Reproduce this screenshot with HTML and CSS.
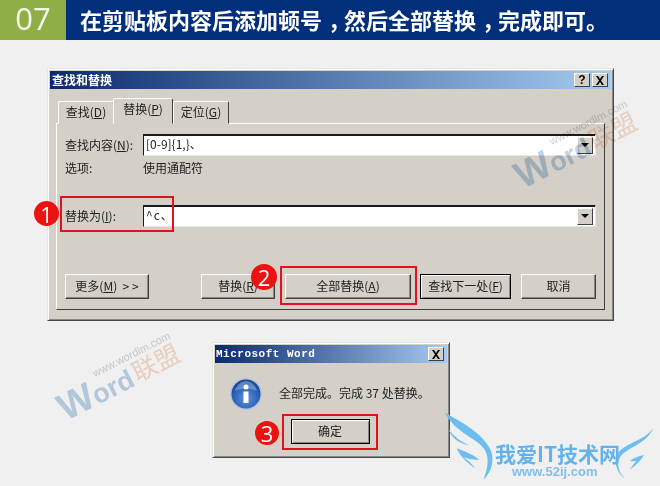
FILE: index.html
```html
<!DOCTYPE html>
<html lang="zh">
<head>
<meta charset="utf-8">
<title>在剪贴板内容后添加顿号</title>
<link rel="stylesheet" href="styles.css">
</head>
<body>
<header class="step-head">
  <div class="step-no">07</div>
  <h1 class="step-title">在剪贴板内容后添加顿号<span class="punct">，</span>然后全部替换<span class="punct">，</span>完成即可。</h1>
</header>

<main class="stage">
  <section class="dialog find-dialog">
    <div class="titlebar">
      <span class="title-text">查找和替换</span>
      <span class="win-btn">?</span>
      <span class="win-btn win-close"><svg width="10" height="9" viewBox="0 0 10 9"><path d="M1 0h2l2 3 2-3h2L6 4.500 9 9H7L5 6 3 9H1l3-4.500z"/></svg></span>
    </div>
    <div class="tabs">
      <span class="tab tab-first">查找(<u>D</u>)</span>
      <span class="tab tab-active">替换(<u>P</u>)</span>
      <span class="tab">定位(<u>G</u>)</span>
    </div>
    <div class="panel">
      <div class="row">
        <label class="label">查找内容(<u>N</u>):</label>
        <div class="combo"><span class="combo-text">[0-9]{1,}、</span><span class="drop"><i></i></span></div>
      </div>
      <div class="row row-options">
        <span class="label">选项:</span>
        <span>使用通配符</span>
      </div>
      <div class="row row-replace">
        <label class="label">替换为(<u>I</u>):</label>
        <div class="combo"><span class="combo-text combo-wide">^c、</span><span class="drop"><i></i></span></div>
      </div>
      <div class="actions">
        <button class="btn btn-more">更多(<u>M</u>)&nbsp; &gt; &gt;</button>
        <button class="btn btn-replace">替换(<u>R</u>)</button>
        <button class="btn btn-all">全部替换(<u>A</u>)</button>
        <button class="btn btn-next btn-default">查找下一处(<u>F</u>)</button>
        <button class="btn btn-cancel">取消</button>
      </div>
    </div>
  </section>

  <section class="dialog msg-dialog">
    <div class="titlebar">
      <span class="title-text title-mono">Microsoft Word</span>
      <span class="win-btn win-close"><svg width="10" height="9" viewBox="0 0 10 9"><path d="M1 0h2l2 3 2-3h2L6 4.500 9 9H7L5 6 3 9H1l3-4.500z"/></svg></span>
    </div>
    <div class="msg-body">
      <svg class="info-icon" width="32" height="32" viewBox="0 0 32 32">
        <defs>
          <radialGradient id="infoFill" cx="50%" cy="65%" r="62%">
            <stop offset="0" stop-color="#5f93dd"/>
            <stop offset="0.65" stop-color="#2b62b8"/>
            <stop offset="1" stop-color="#16408f"/>
          </radialGradient>
        </defs>
        <circle cx="16" cy="16" r="15.200" fill="url(#infoFill)" stroke="#b7c3d8" stroke-width="1.400"/>
        <path d="M5 13C7 6 12 3 16 3s9 3 11 10c-6-3-16-3-22 0z" fill="#fff" opacity=".28"/>
        <circle cx="16" cy="9" r="2.500" fill="#fff"/>
        <path d="M13.500 13.500h5V25h-5z" fill="#fff"/>
      </svg>
      <span class="msg-text">全部完成。完成 37 处替换。</span>
    </div>
    <div class="msg-actions"><button class="btn btn-ok btn-default">确定</button></div>
  </section>

  <div class="mark mark-a"><span class="mark-url">www.wordlm.com</span><span class="mark-word">Word</span><span class="mark-cn">联盟</span></div>
  <div class="mark mark-b"><span class="mark-url">www.wordlm.com</span><span class="mark-word">Word</span><span class="mark-cn">联盟</span></div>

  <div class="redbox box-1"></div>
  <div class="redbox box-2"></div>
  <div class="redbox box-3"></div>
  <div class="badge badge-1">1</div>
  <div class="badge badge-2">2</div>
  <div class="badge badge-3">3</div>

  <div class="logo">
    <svg class="wings" width="220" height="86" viewBox="0 0 660 258">
      <g fill="#6dbdf0">
        <path d="M14 36C50 62 122 90 152 150c10 25 8 60-22 90 14-35 18-65 5-90C110 112 45 100 14 36z"/>
        <path d="M25 88c18 24 42 40 62 48C60 132 35 116 25 88z"/>
        <path d="M50 145c20 8 50 18 68 35-22-1-38-4-48-9 12 9 26 20 35 34-20-14-44-34-55-60z"/>
        <path d="M640 85c-20 45-70 55-95 80-15 15-15 50 10 70-20-10-35-45-25-70 20-35 80-40 110-80z"/>
        <path d="M612 165c-16 4-30 8-42 18 7 1 13 1 20-1-7 7-14 16-20 26 16-10 32-26 42-43z"/>
      </g>
    </svg>
    <div class="logo-cn">我爱IT技术网</div>
    <div class="logo-url">www.52ij.com</div>
  </div>
</main>
</body>
</html>
```
FILE: styles.css
```css
* { box-sizing: border-box; }
html, body { margin: 0; padding: 0; }
body {
  width: 660px;
  height: 486px;
  overflow: hidden;
  background: #f0f0f0;
  color: #222;
  font: 12px/1.2 "Noto Sans CJK SC", "Liberation Sans", sans-serif;
}
.step-head { display: flex; height: 40px; background: #012f7b; }
.step-no {
  width: 66px;
  height: 40px;
  background: #8fae45;
  color: #f4f7e8;
  font: 400 31px/37px "Open Sans", "Liberation Sans", sans-serif;
  text-align: center;
}
.step-title {
  margin: 0;
  padding-left: 14px;
  color: #fff;
  font: 700 22px/38px "Noto Sans CJK SC", sans-serif;
  white-space: nowrap;
}
.punct { display: inline-block; transform: translateX(6px); }
.stage { position: relative; height: 446px; }

/* windows */
.dialog {
  position: absolute;
  padding: 2px;
  background: #d4d0c8;
  border: 1px solid;
  border-color: #e8e6e0 #4a4a48 #4a4a48 #e8e6e0;
  box-shadow: inset 1px 1px 0 #fff, inset -1px -1px 0 #888;
}
.find-dialog { left: 47px; top: 28px; width: 567px; height: 253px; }
.msg-dialog { left: 212px; top: 302px; width: 238px; height: 116px; }
.titlebar {
  display: flex;
  align-items: center;
  gap: 2px;
  height: 18px;
  padding: 0 3px 0 2px;
  background: linear-gradient(90deg, #0b2a6d, #a6caf0);
}
.title-text {
  flex: 1;
  color: #fff;
  font: 700 12px/18px "Noto Sans CJK SC", sans-serif;
  white-space: nowrap;
}
.title-mono {
  margin-left: -1px;
  font: 700 11px/18px "Liberation Mono", monospace;
  letter-spacing: .5px;
}
.win-btn {
  display: flex;
  align-items: center;
  justify-content: center;
  width: 16px;
  height: 14px;
  background: #d4d0c8;
  border: 1px solid;
  border-color: #fff #404040 #404040 #fff;
  color: #000;
  font: 700 12px/12px "Liberation Sans", sans-serif;
}

/* tabs */
.tabs { display: flex; align-items: flex-end; height: 34px; margin-left: 7px; position: relative; z-index: 1; }
.tab {
  display: flex;
  align-items: center;
  justify-content: center;
  width: 56px;
  height: 23px;
  margin-bottom: -1px;
  background: #d4d0c8;
  border: 1px solid;
  border-color: #fff #404040 transparent #fff;
  border-radius: 2px 2px 0 0;
}
.tab-first { margin-left: 1px; }
.tab-active { width: 60px; height: 26px; padding-bottom: 3px; margin: 0 0 -1px -1px; border-bottom-color: #d4d0c8; }

.panel {
  display: flex;
  flex-direction: column;
  width: 549px;
  height: 187px;
  margin-left: 6px;
  padding: 10px 8px 0;
  border: 1px solid;
  border-color: #fff #404040 #404040 #fff;
}
.row { display: flex; align-items: center; height: 22px; }
.label { width: 78px; flex: none; }
.row-options { height: 18px; margin-top: 3px; }
.row-replace { margin-top: 28px; }
.combo {
  flex: 1;
  display: flex;
  align-items: center;
  height: 22px;
  padding: 0 2px 2px 2px;
  background: #fff;
  border: 1px solid;
  border-color: #1a1a1a #e8e6e0 #e8e6e0 #1a1a1a;
  box-shadow: inset 0 1px 0 #1a1a1a;
}
.combo-text { flex: 1; }
.combo-wide { letter-spacing: 1px; }
.drop {
  display: flex;
  align-items: center;
  justify-content: center;
  width: 16px;
  height: 17px;
  margin-top: 2px;
  background: #d4d0c8;
  border: 1px solid;
  border-color: #fff #404040 #404040 #fff;
}
.drop i { border: 4px solid transparent; border-top-color: #000; border-bottom: 0; }

/* buttons */
.actions { display: flex; height: 25px; margin-top: 47px; }
.btn {
  height: 25px;
  padding: 0 0 2px;
  background: #d4d0c8;
  border: 1px solid;
  border-color: #fff #404040 #404040 #fff;
  color: #222;
  font: 12px/1 "Noto Sans CJK SC", sans-serif;
  box-shadow: inset -1px -1px 0 #888;
}
.btn-default { border: 1px solid #000; box-shadow: inset 1px 1px 0 #fff, inset -1px -1px 0 #888; }
.btn-more { width: 84px; }
.btn-replace { width: 74px; margin-left: auto; }
.btn-all { width: 126px; margin-left: 10px; }
.btn-next { width: 91px; margin-left: 9px; }
.btn-cancel { width: 75px; margin-left: 10px; }

/* message box */
.msg-body { display: flex; align-items: center; gap: 17px; height: 50px; padding: 11px 0 0 15px; }
.msg-text { white-space: nowrap; }
.msg-actions { display: flex; justify-content: center; padding: 6px 0 0 0; }
.btn-ok { width: 79px; margin-left: -2px; }

/* annotations */
.redbox { position: absolute; border: 2px solid #e0131d; }
.box-1 { left: 60px; top: 156px; width: 114px; height: 36px; }
.box-2 { left: 280px; top: 226px; width: 137px; height: 39px; }
.box-3 { left: 282px; top: 374px; width: 96px; height: 36px; }
.badge {
  position: absolute;
  display: flex;
  align-items: center;
  justify-content: center;
  border-radius: 50%;
  background: #ee1111;
  color: #fff;
  font: 22px/1 "Open Sans", "Liberation Sans", sans-serif;
}
.badge-1 { left: 34px; top: 161px; width: 25px; height: 25px; }
.badge-2 { left: 251px; top: 224px; width: 26px; height: 26px; }
.badge-3 { left: 255px; top: 381px; width: 24px; height: 24px; }

/* watermarks */
.mark {
  position: absolute;
  width: 130px;
  height: 46px;
  transform: rotate(-27deg);
  transform-origin: 0 100%;
  white-space: nowrap;
  mix-blend-mode: multiply;
}
.mark-a { left: 524px; top: 106px; }
.mark-b { left: 67px; top: 338px; }
.mark-url {
  position: absolute;
  left: 46px;
  top: 6px;
  color: #d2d2d2;
  font: 11px/14px "Liberation Sans", sans-serif;
}
.mark-word {
  position: absolute;
  left: 0;
  top: 12px;
  color: #bdd3ea;
  font: 900 27px/36px "Liberation Sans", sans-serif;
}
.mark-word::first-letter { font-size: 38px; }
.mark-cn {
  position: absolute;
  left: 82px;
  top: 15px;
  color: #f6dccb;
  font: 25px/30px "Noto Sans CJK SC", sans-serif;
}

/* site logo */
.logo { position: absolute; left: 440px; top: 360px; width: 220px; height: 86px; }
.wings { display: block; }
.logo-cn {
  position: absolute;
  left: 55px;
  top: 41px;
  color: #62b3ec;
  font: 700 21px/24px "Noto Sans CJK SC", sans-serif;
  white-space: nowrap;
}
.logo-url {
  position: absolute;
  left: 72px;
  top: 65px;
  color: #7fbfee;
  font: 700 13px/14px "Liberation Sans", sans-serif;
  white-space: nowrap;
}
```
